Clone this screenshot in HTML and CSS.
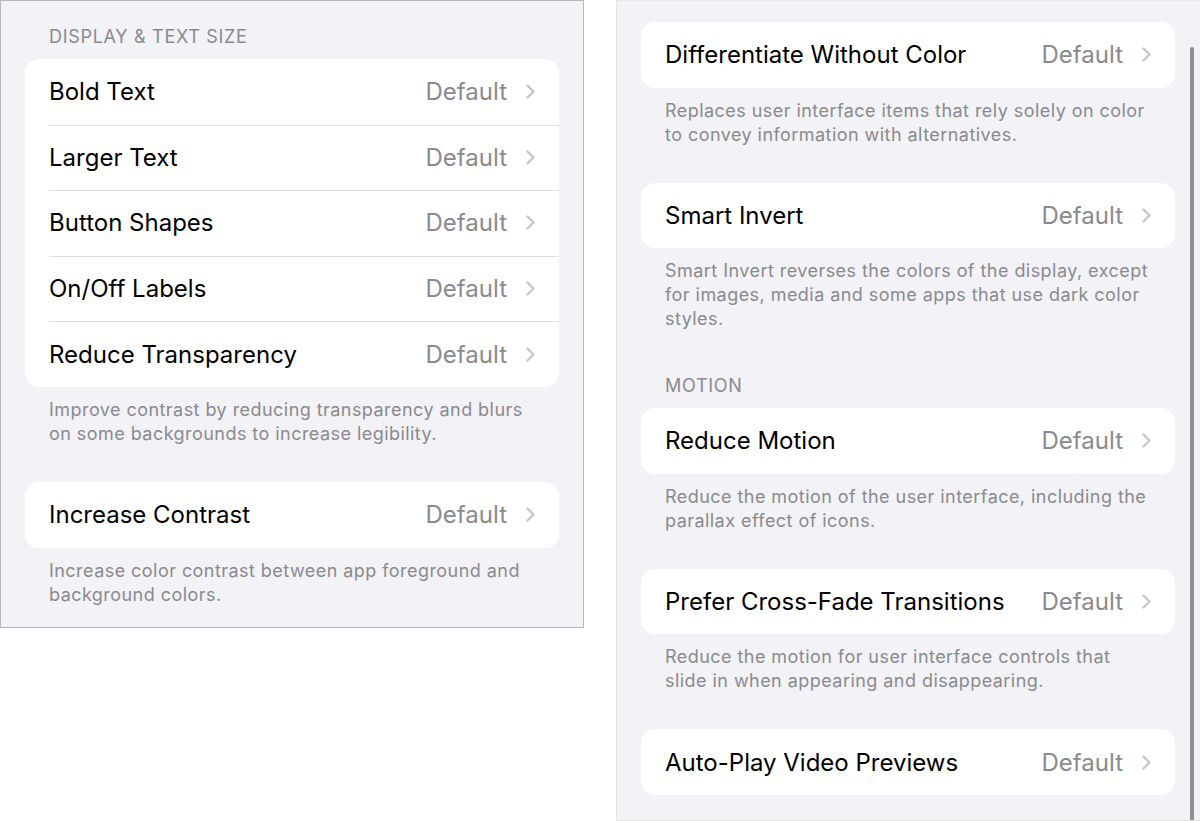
FILE: index.html
```html
<!DOCTYPE html>
<html lang="en">

<head>
    <meta charset="UTF-8">
    <meta name="viewport" content="width=device-width, initial-scale=1.0">
    <title>Accessibility</title>
    <link rel="stylesheet" href="styles.css">
</head>

<body>
    <div class="screens">
        <div class="panel panel-left">
            <div class="section">
                <h3 class="section-title">Display &amp; Text Size</h3>
                <div class="group">
                    <a class="row" href="#"><span class="label">Bold Text</span><span class="value">Default</span><i class="chevron"></i></a>
                    <a class="row" href="#"><span class="label">Larger Text</span><span class="value">Default</span><i class="chevron"></i></a>
                    <a class="row" href="#"><span class="label">Button Shapes</span><span class="value">Default</span><i class="chevron"></i></a>
                    <a class="row" href="#"><span class="label">On/Off Labels</span><span class="value">Default</span><i class="chevron"></i></a>
                    <a class="row" href="#"><span class="label">Reduce Transparency</span><span class="value">Default</span><i class="chevron"></i></a>
                </div>
                <p class="note">Improve contrast by reducing transparency and blurs on some backgrounds to increase legibility.</p>
            </div>
            <div class="section">
                <div class="group">
                    <a class="row" href="#"><span class="label">Increase Contrast</span><span class="value">Default</span><i class="chevron"></i></a>
                </div>
                <p class="note">Increase color contrast between app foreground and background colors.</p>
            </div>
        </div>

        <div class="panel panel-right">
            <div class="section">
                <div class="group">
                    <a class="row" href="#"><span class="label">Differentiate Without Color</span><span class="value">Default</span><i class="chevron"></i></a>
                </div>
                <p class="note">Replaces user interface items that rely solely on color to convey information with alternatives.</p>
            </div>
            <div class="section">
                <div class="group">
                    <a class="row" href="#"><span class="label">Smart Invert</span><span class="value">Default</span><i class="chevron"></i></a>
                </div>
                <p class="note">Smart Invert reverses the colors of the display, except for images, media and some apps that use dark color styles.</p>
            </div>
            <div class="section section-motion">
                <h3 class="section-title">Motion</h3>
                <div class="group">
                    <a class="row" href="#"><span class="label">Reduce Motion</span><span class="value">Default</span><i class="chevron"></i></a>
                </div>
                <p class="note">Reduce the motion of the user interface, including the parallax effect of icons.</p>
            </div>
            <div class="section">
                <div class="group">
                    <a class="row" href="#"><span class="label">Prefer Cross-Fade Transitions</span><span class="value">Default</span><i class="chevron"></i></a>
                </div>
                <p class="note">Reduce the motion for user interface controls that slide in when appearing and disappearing.</p>
            </div>
            <div class="section">
                <div class="group">
                    <a class="row" href="#"><span class="label">Auto-Play Video Previews</span><span class="value">Default</span><i class="chevron"></i></a>
                </div>
            </div>
            <div class="scrollbar"></div>
        </div>
    </div>
</body>

</html>
```

FILE: styles.css
```css
* {
    box-sizing: border-box;
}

body {
    margin: 0;
    background: #fff;
    font-family: Inter, "Noto Sans", sans-serif;
    -webkit-font-smoothing: antialiased;
}

.screens {
    display: flex;
    align-items: flex-start;
    gap: 32px;
}

.panel {
    width: 584px;
    background: #f2f2f7;
    overflow: hidden;
}

.panel-left {
    height: 628px;
    border: 1px solid #b6b6b8;
    padding: 25px 24px 0;
}

.panel-right {
    position: relative;
    height: 821px;
    border-top: 1px solid #e9e9ec;
    border-left: 1px solid #e4e4e7;
    border-bottom: 1px solid #e4e4e7;
    padding: 21px 25px 0 24px;
}

.section {
    margin-bottom: 36px;
}

.section-motion {
    margin-top: 44px;
}

.section-title {
    margin: 0 0 11px;
    padding: 0 24px;
    height: 22px;
    line-height: 22px;
    font-size: 18px;
    font-weight: 400;
    text-transform: uppercase;
    letter-spacing: 0.7px;
    color: #8a8a8e;
}

.group {
    background: #fff;
    border-radius: 14px;
    overflow: hidden;
}

.row {
    position: relative;
    display: flex;
    align-items: center;
    height: 65.6px;
    padding: 0 24px;
    text-decoration: none;
    color: #000;
}

.row + .row::before {
    content: '';
    position: absolute;
    top: 0;
    left: 24px;
    right: 0;
    height: 1px;
    background: #dedee2;
}

.row .label {
    flex: 1;
    font-size: 24px;
}

.row .value {
    font-size: 24px;
    color: #8a8a8e;
    margin-right: 19px;
}

.chevron {
    display: block;
    width: 9px;
    height: 15px;
    background: url("data:image/svg+xml,%3Csvg xmlns='http://www.w3.org/2000/svg' viewBox='0 0 9 15'%3E%3Cpath d='M1.5 1.5 L7.5 7.5 L1.5 13.5' fill='none' stroke='%23c4c4c7' stroke-width='2.2' stroke-linecap='round' stroke-linejoin='round'/%3E%3C/svg%3E") no-repeat center;
}

.note {
    margin: 0;
    padding: 11px 24px 0;
    font-size: 18px;
    line-height: 24px;
    letter-spacing: 0.45px;
    color: #8a8a8e;
}

.scrollbar {
    position: absolute;
    top: 46px;
    right: 6px;
    bottom: -2px;
    width: 4px;
    border-radius: 2px 2px 0 0;
    background: #909094;
}
```
